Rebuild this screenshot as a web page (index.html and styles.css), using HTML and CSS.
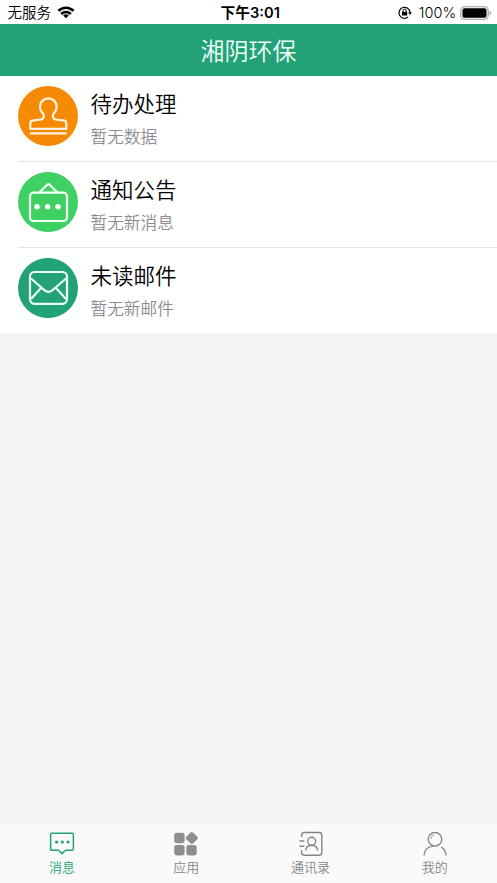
FILE: index.html
```html
<!DOCTYPE html>
<html lang="zh-CN">
<head>
<meta charset="utf-8">
<title>湘阴环保</title>
<link rel="stylesheet" href="styles.css">
</head>
<body>
<div class="app">
  <div class="status">
    <div class="status-left">
      <span>无服务</span>
      <svg class="wifi" width="18" height="13" viewBox="0 0 18 13" fill="none" stroke="#000" stroke-width="2.7">
        <path d="M1.400 4.900a10.800 10.800 0 0 1 15.200 0M4.200 8a6.800 6.800 0 0 1 9.600 0"/>
        <path d="M9 12.200 6.200 9.600a4 4 0 0 1 5.600 0z" fill="#000" stroke="none"/>
      </svg>
    </div>
    <div class="status-time">下午3:01</div>
    <div class="status-right">
      <svg class="lock" width="14" height="13" viewBox="0 0 14 13" fill="none" stroke="#000" stroke-width="1.200">
        <path d="M10.200 10.900A5.500 5.500 0 1 1 12 6.500"/>
        <path d="M10.100 6.200h3.800L12 8.900z" fill="#000" stroke="none"/>
        <path d="M4 5.800h5.200v3.700H4z" fill="#000" stroke="none"/>
        <path d="M5 6V4.700a1.600 1.600 0 0 1 3.200 0V6" stroke-width="1"/>
      </svg>
      <span class="percent">100%</span>
      <svg class="battery" width="32" height="14" viewBox="0 0 32 14">
        <rect x=".8" y=".8" width="27.400" height="12.400" rx="3.600" fill="none" stroke="#999" stroke-width="1.100"/>
        <rect x="2.500" y="2.200" width="24" height="9.600" rx="2" fill="#000"/>
        <path d="M29.600 4.800q1.400.6 1.400 2.200t-1.400 2.200z" fill="#999"/>
      </svg>
    </div>
  </div>
  <header class="header">湘阴环保</header>
  <main class="list">
    <div class="row">
      <div class="avatar orange">
        <svg width="60" height="60" viewBox="0 0 60 60" fill="none" stroke="#fff5e0" stroke-width="2.200" stroke-linejoin="round">
          <path d="M12.300 42.800v-5.300q0-3 3-3.200l6.500-.6q4-.5 4-3.800 0-1-1.200-3a8.400 8.400 0 1 1 11.400 0q-1.200 2-1.200 3 0 3.300 4 3.800l6.500.6q3 .2 3 3.200v5.300z"/>
          <path d="M11.800 47.300h37"/>
        </svg>
      </div>
      <div class="info"><div class="name">待办处理</div><div class="sub">暂无数据</div></div>
    </div>
    <div class="row">
      <div class="avatar lime">
        <svg width="60" height="60" viewBox="0 0 60 60" fill="none" stroke="#f2fff2" stroke-width="2.200" stroke-linejoin="round">
          <rect x="12" y="20.700" width="37" height="28.300" rx="3.500"/>
          <path d="m21.500 20.300 7.900-7.700q1-1 2 0l7.900 7.700"/>
          <g fill="#fff" stroke="none"><circle cx="19" cy="34.800" r="2.700"/><circle cx="29.600" cy="34.800" r="2.700"/><circle cx="40" cy="34.800" r="2.700"/></g>
        </svg>
      </div>
      <div class="info"><div class="name">通知公告</div><div class="sub">暂无新消息</div></div>
    </div>
    <div class="row">
      <div class="avatar green">
        <svg width="60" height="60" viewBox="0 0 60 60" fill="none" stroke="#e8fff8" stroke-width="2.200" stroke-linejoin="round">
          <rect x="12" y="14" width="37" height="31.800" rx="4.500"/>
          <path d="m13 20.500 13 11.300q4.500 4 9 0L48 20.500M13 41l10-11M48 41 38 30"/>
        </svg>
      </div>
      <div class="info"><div class="name">未读邮件</div><div class="sub">暂无新邮件</div></div>
    </div>
  </main>
  <nav class="tabs">
    <div class="tab active">
      <svg width="26" height="26" viewBox="0 0 26 26" fill="none" stroke="currentColor" stroke-width="1.500" stroke-linejoin="round">
        <path d="M3 2.200h20q1.400 0 1.400 1.400v14.200q0 1.400-1.400 1.400h-6.500L13 22.600l-3.500-3.400H3q-1.400 0-1.400-1.400V3.600q0-1.400 1.400-1.400z"/>
        <g fill="currentColor" stroke="none"><circle cx="7.600" cy="11" r="1.600"/><circle cx="13.300" cy="11" r="1.600"/><circle cx="19" cy="11" r="1.600"/></g>
      </svg>
      <span>消息</span>
    </div>
    <div class="tab">
      <svg width="26" height="26" viewBox="0 0 26 26" fill="#8e8e8e">
        <rect x="1.200" y="1.800" width="10.400" height="10.400" rx="2.400"/>
        <rect x="1.200" y="14" width="10.400" height="10.400" rx="2.400"/>
        <rect x="13.300" y="14" width="10.400" height="10.400" rx="2.400"/>
        <rect x="14" y="2.200" width="9.600" height="9.600" rx="2" transform="rotate(45 18.800 7)"/>
      </svg>
      <span>应用</span>
    </div>
    <div class="tab">
      <svg width="26" height="26" viewBox="0 0 26 26" fill="none" stroke="currentColor" stroke-width="1.400">
        <path d="M3.600 6V4.200q0-2.700 2.700-2.700h14.800q2.700 0 2.700 2.700v17.300q0 2.700-2.700 2.700H6.300q-2.700 0-2.700-2.700V19M1.400 10h5M1.400 15.300h5"/>
        <circle cx="13.700" cy="10.300" r="4"/>
        <path d="M7.700 19.500q.6-5 6-5.200 5.300.2 6 5.200"/>
      </svg>
      <span>通讯录</span>
    </div>
    <div class="tab">
      <svg width="26" height="26" viewBox="0 0 26 26" fill="none" stroke="currentColor" stroke-width="1.400">
        <circle cx="13" cy="8.300" r="6.800"/>
        <path d="M8.700 8.300q.1-3.600 3.600-4.300" stroke-width=".8"/>
        <path d="M2 24.500q.5-8.700 9.300-9.400M19.200 16.200q4.600 2.400 4.900 8.300"/>
      </svg>
      <span>我的</span>
    </div>
  </nav>
</div>
</body>
</html>
```
FILE: styles.css
```css
* { box-sizing: border-box; }
body {
  margin: 0;
  font-family: "Noto Sans CJK SC", sans-serif;
  font-weight: 350;
}
svg { display: block; flex: none; }
.app {
  height: 883px;
  display: flex;
  flex-direction: column;
  background: #f3f3f3;
}
.status {
  height: 24px;
  display: grid;
  grid-template-columns: 1fr auto 1fr;
  align-items: center;
  padding: 2px 5px 0 7.500px;
  background: #fff;
  color: #000;
  font: 350 14.500px/22px Inter, "Noto Sans CJK SC", sans-serif;
}
.status-left { display: flex; align-items: center; gap: 6px; }
.status-left svg { margin-top: -1px; }
.status-time { font-weight: 600; font-size: 14.700px; padding-left: 1px; }
.status-right { display: flex; align-items: center; justify-content: flex-end; }
.status-right svg { margin-top: -1px; }
.percent { margin: 0 4px 0 7px; }
.header {
  height: 52px;
  background: #23a277;
  color: #f0fffa;
  font-size: 24px;
  line-height: 52px;
  text-align: center;
}
.list { background: #fff; padding-left: 18px; height: 257px; }
.row {
  height: 86.200px;
  display: flex;
  padding-top: 9.500px;
  border-bottom: 1px solid #e4e4e6;
}
.row:last-child { border-bottom: 0; height: 84.600px; }
.avatar { width: 60px; height: 60px; border-radius: 50%; flex: none; }
.orange { background: #f78a05; }
.lime { background: #3fd063; }
.green { background: #23a277; }
.info { margin-left: 12.500px; }
.name { font-size: 21.500px; line-height: 32px; margin-top: 1px; color: #000; }
.sub { font-size: 16.700px; line-height: 26px; margin-top: 4px; color: #8b8b90; }
.tabs {
  margin-top: auto;
  height: 59px;
  display: grid;
  grid-template-columns: repeat(4, 1fr);
  background: #fafafa;
}
.tab {
  display: flex;
  flex-direction: column;
  align-items: center;
  padding-top: 7px;
  color: #858585;
  font-size: 13px;
  line-height: 20px;
}
.active { color: #23a277; }
```
